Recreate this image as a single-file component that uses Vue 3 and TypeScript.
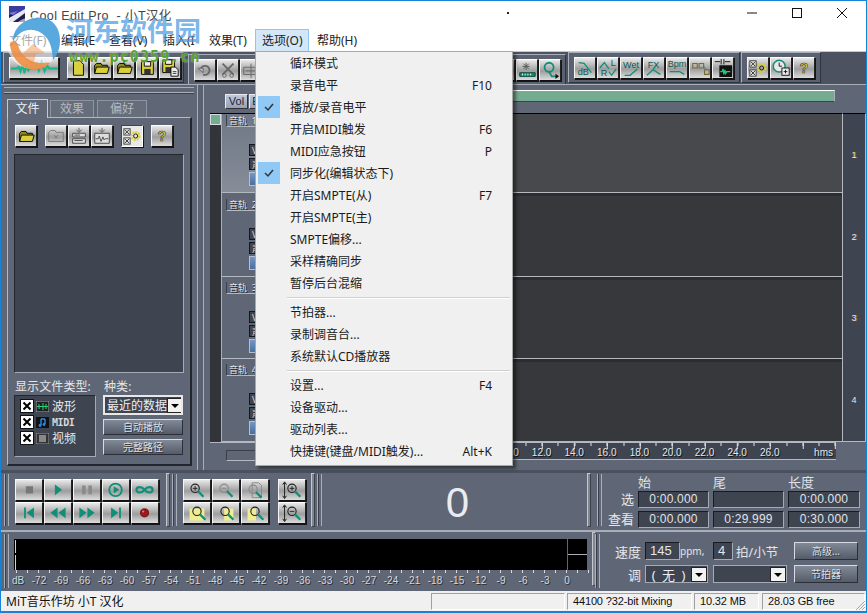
<script setup lang="ts">
const Y = '#d8d03c'
const T = '#0f8f78'
const folder = `<path d="M4 17V8l2-2h5l1 2h6v2" fill="#8f8a20" stroke="#000"/><path d="M4 17l2-7h14l-2 7z" fill="${Y}" stroke="#000"/>`
const floppy = `<path d="M5 4h13v14H5z" fill="${Y}" stroke="#000"/><path d="M8 4h7v5H8z" fill="#eee" stroke="#000"/><path d="M8 12h7v6H8z" fill="#333"/>`
const gear = `<rect x="2" y="3" width="7" height="7" fill="#ddd" stroke="#444"/><path d="M3 4l5 5M8 4l-5 5" stroke="#333"/><rect x="2" y="13" width="7" height="7" fill="#ddd" stroke="#444"/><path d="M3 14l5 5M8 14l-5 5" stroke="#333"/><circle cx="15" cy="11" r="4" fill="none" stroke="#d8d03c" stroke-width="3" stroke-dasharray="2 1"/><circle cx="15" cy="11" r="2.2" fill="none" stroke="#111"/>`
const help = `<text x="11" y="17" text-anchor="middle" font-family="Liberation Sans" font-weight="700" font-size="16" fill="${Y}" stroke="#333" stroke-width=".6">?</text>`
const teal = (d: string) => `<path d="${d}" fill="none" stroke="${T}" stroke-width="1.4"/>`
const word = (s: string, x: number, y: number, a = 'start') => `<text x="${x}" y="${y}" text-anchor="${a}" font-family="Liberation Sans" font-size="10" fill="#0b5a50">${s}</text>`
const grey = (s: string) => `<g stroke="#666" fill="#bbb">${s}</g>`

const bar1 = [
  `<path d="M6 3h7l4 4v12H6z" fill="${Y}" stroke="#000"/>`,
  folder,
  `<path d="M11 2v5" stroke="${T}" stroke-width="2"/><path d="M8 6h6l-3 3z" fill="${T}"/>` + folder,
  floppy,
  `<g transform="translate(-2 -2)">${floppy}</g><path d="M12 10h5l3 3v7h-8z" fill="#eee" stroke="#000"/><path d="M14 15h4M14 17h4" stroke="#333"/>`,
]
const bar2 = [
  grey(`<path d="M6 11a5 5 0 1 1 3 5" fill="none" stroke-width="2"/><path d="M3 9h6v5z"/>`),
  `<path d="M5 4l12 12M17 4L5 16" stroke="#666" stroke-width="2"/><circle cx="7" cy="17" r="2" fill="none" stroke="#666"/><circle cx="15" cy="17" r="2" fill="none" stroke="#666"/>`,
  grey(`<path d="M3 8h16v8H3z" fill="none"/><path d="M5 12h12M11 4v16"/>`),
  '', '', '', '', '', '', '', '', '', '', '',
  `<path d="M3 14h17v4H3z" fill="${T}" stroke="#043"/><path d="M6 15v2M9 15v2M12 15v2M15 15v2" stroke="#fff"/><path d="M10 3v8M6 7h8M7 4l6 6M13 4l-6 6" stroke="#555"/>`,
  `<circle cx="10" cy="8" r="5" fill="none" stroke="${T}" stroke-width="2"/><path d="M10 13l3 5h6" fill="none" stroke="${T}" stroke-width="2"/><path d="M17 15l4 3-4 3z" fill="#111"/>`,
]
const bar3 = [
  word('dB', 3, 19) + teal('M4 5l6 1 8 10'),
  word('L', 14, 9) + word('R', 3, 20) + teal('M2 11l5-6 5 7M12 15l3 4 5-7'),
  word('Wet', 11, 11, 'middle') + teal('M4 19h6l8-7'),
  word('FX', 4, 11) + teal('M3 19l7-6 8 5M10 13l3-5'),
  word('Bpm', 11, 10, 'middle') + teal('M3 15h6l5 0 5 3'),
  `<path d="M3 6h5v5H3zM10 6h5v5h-5zM16 13h5v5h-5z" fill="none" stroke="#7a6a3a" stroke-width="1.2"/><path d="M15 9l3 4" stroke="${T}"/>`,
  `<rect x="7" y="8" width="14" height="13" fill="#111"/><path d="M8 15h2l1-3 1 6 1-5 1 4 1-2h4" fill="none" stroke="#2bc87a" stroke-width="1.4"/><path d="M2 4h6M13 4h6M9 1v6M12 1v6" stroke="#111"/>`,
]
const bar4 = [
  gear,
  `<circle cx="9" cy="9" r="6.5" fill="#e8e8e8" stroke="${T}" stroke-width="1.6"/><path d="M9 5v4h3" fill="none" stroke="#111"/><rect x="12" y="11" width="8" height="8" fill="#eee" stroke="#111"/><path d="M16 13v4M14 15h4" stroke="#111"/>`,
  help,
]
const panelBtns = [
  { n: folder, cls: '' },
  { n: `<path d="M3 17V7l2-2h5l1 2h8v10z" fill="none" stroke="#777"/><path d="M9 10l4 4M13 10l-4 4" stroke="#777"/>`, cls: 'mt' },
  { n: `<path d="M11 2v4M8 4l3 3 3-3" stroke="#555" fill="none"/><path d="M4 8h14v4H4zM4 14h14v5H4z" fill="#ddd" stroke="#444"/><path d="M6 10h6M6 16h9" stroke="#444"/>`, cls: '' },
  { n: `<path d="M11 2v4M8 4l3 3 3-3" stroke="#555" fill="none"/><path d="M3 8h16v11H3z" fill="#ddd" stroke="#444"/><path d="M4 14h3l1-3 2 6 2-5 1 3 2-1h3" fill="none" stroke="#444"/>`, cls: '' },
  { n: gear, cls: 'pressed sp' },
  { n: help, cls: 'sp2' },
]
const tri = (d: string, c = T) => `<path d="${d}" fill="${c}"/>`
const tBtns = [
  `<rect x="11" y="7" width="8" height="8" fill="#777"/>`,
  tri('M11 5l8 6-8 6z'),
  `<path d="M9 6h4v10H9zM16 6h4v10h-4z" fill="#8a8a8a"/>`,
  `<circle cx="14" cy="11" r="7" fill="none" stroke="${T}" stroke-width="2"/>` + tri('M12 7l6 4-6 4z'),
  `<path d="M14 11c-3-4-9-4-9 0s6 4 9 0 9-4 9 0-6 4-9 0z" fill="none" stroke="${T}" stroke-width="2.4"/>`,
  `<path d="M9 5h2v12H9z" fill="${T}"/>` + tri('M20 5v12l-8-6z'),
  tri('M14 5v12l-8-6zM23 5v12l-8-6z'),
  tri('M6 5v12l8-6zM15 5v12l8-6z'),
  tri('M9 5v12l8-6z') + `<path d="M18 5h2v12h-2z" fill="${T}"/>`,
  `<circle cx="14" cy="11" r="4.5" fill="#a01818" stroke="#601010"/><circle cx="12.5" cy="9.5" r="1.2" fill="#e08080"/>`,
]
const lens = (x: number, y: number, inner = '', c = '#222') => `<circle cx="${x}" cy="${y}" r="4.5" fill="none" stroke="${c}" stroke-width="1.2"/><path d="M${x + 3} ${y + 3}l6 6" stroke="${T}" stroke-width="2.4"/>${inner}`
const plus = (x: number, y: number, c = '#222') => `<path d="M${x - 2.5} ${y}h5M${x} ${y - 2.5}v5" stroke="${c}"/>`
const minus = (x: number, y: number, c = '#222') => `<path d="M${x - 2.5} ${y}h5" stroke="${c}"/>`
const note = '#f0ec90'
const zBtns = [
  lens(12, 9, plus(12, 9)),
  lens(12, 9, minus(12, 9, '#888'), '#888'),
  `<path d="M11 3h7l3 3v13h-10z" fill="none" stroke="#888"/>` + lens(12, 10, '', '#888'),
  `<rect x="6" y="6" width="16" height="13" fill="${note}"/>` + lens(14, 9),
  `<rect x="12" y="6" width="10" height="13" fill="${note}"/>` + lens(13, 9),
  `<rect x="6" y="6" width="9" height="13" fill="${note}"/>` + lens(14, 9),
]
const vBtns = [
  `<path d="M6 3v16M4 5l2-3 2 3M4 17l2 3 2-3" fill="none" stroke="#111"/>` + lens(14, 9, plus(14, 9)),
  `<path d="M6 3v16M4 5l2-3 2 3M4 17l2 3 2-3" fill="none" stroke="#111"/>` + lens(14, 9, minus(14, 9)),
]
const fileTypes = [
  { label: '波形', midi: false, svg: `<rect width="13" height="11" fill="#222" stroke="#aaa"/><path d="M1 5.5h11M3 3v5M7 2v7M10 3v5" stroke="#2bd07a"/>` },
  { label: 'MIDI', midi: true, svg: `<rect width="13" height="11" fill="#111"/><path d="M5 2v6M9 2v5M5 2h4" stroke="#2a8ae8" stroke-width="1.4" fill="none"/><circle cx="4" cy="8.5" r="1.4" fill="#2a8ae8"/><circle cx="8" cy="7.5" r="1.4" fill="#2a8ae8"/>` },
  { label: '视频', midi: false, svg: `<rect width="13" height="11" fill="#333" stroke="#999"/><rect x="3" y="2" width="7" height="7" fill="#888"/>` },
]
const menuBar = [
  { t: '文件(F)', w: 52 }, { t: '编辑(E', w: 48 }, { t: '查看(V)', w: 54 }, { t: '插入(I', w: 46 },
  { t: '效果(T)', w: 46 }, { t: '选项(O)', w: 54, on: true }, { t: '帮助(H)', w: 60 },
]
const menu = [
  { t: '循环模式' }, { t: '录音电平', k: 'F10' }, { t: '播放/录音电平', c: true }, { t: '开启MIDI触发', k: 'F6' },
  { t: 'MIDI应急按钮', k: 'P' }, { t: '同步化(编辑状态下)', c: true }, { t: '开启SMPTE(从)', k: 'F7' }, { t: '开启SMPTE(主)' },
  { t: 'SMPTE偏移...' }, { t: '采样精确同步' }, { t: '暂停后台混缩' }, { sep: true },
  { t: '节拍器...' }, { t: '录制调音台...' }, { t: '系统默认CD播放器' }, { sep: true },
  { t: '设置...', k: 'F4' }, { t: '设备驱动...' }, { t: '驱动列表...' }, { t: '快捷键(键盘/MIDI触发)...', k: 'Alt+K' },
]
const rulerLabels = ['10.0', '12.0', '14.0', '16.0', '18.0', '20.0', '22.0', '24.0', '26.0']
const scale = ['-72', '-69', '-66', '-63', '-60', '-57', '-54', '-51', '-48', '-45', '-42', '-39', '-36', '-33', '-30', '-27', '-24', '-21', '-18', '-15', '-12', '-9', '-6', '-3', '0']
const times = [
  { l: '选', v: ['0:00.000', '', '0:00.000'] },
  { l: '查看', v: ['0:00.000', '0:29.999', '0:30.000'] },
]
</script>

<template>
  <div class="win">
    <header class="title">
      <svg class="logo" viewBox="0 0 16 16"><rect width="16" height="16" fill="#20204a" /><path d="M0 0h16v5L6 9H0z" fill="#3a3aa0" /><path d="M0 12L16 3v4L4 16H0z" fill="#e8e8f4" /><path d="M0 7l9-2-5 4z" fill="#7a7ad0" /></svg>
      <span class="ttext">Cool Edit Pro &nbsp;- 小T汉化</span>
      <span class="dot"></span>
      <svg class="ctl" viewBox="0 0 12 12"><path d="M1 6h10" stroke="#111" /></svg>
      <svg class="ctl" viewBox="0 0 12 12"><rect x="1.5" y="1.5" width="9" height="9" fill="none" stroke="#111" /></svg>
      <svg class="ctl" viewBox="0 0 12 12"><path d="M1 1l10 10M11 1L1 11" stroke="#111" /></svg>
    </header>
    <nav class="menubar">
      <span v-for="m in menuBar" :key="m.t" class="mi" :class="{ on: m.on }" :style="{ width: m.w + 'px' }">{{ m.t }}</span>
    </nav>

    <section class="toolbar">
      <div class="tg g1">
        <button class="b wave">
          <svg viewBox="0 0 50 22"><path d="M1 11h6l2-2 2 5 2-8 2 10 2-8 2 5 2-3h5l2-4 2 7 3-9 3 10 3-6 2 3h9" fill="none" stroke="#10b88a" stroke-width="2" /></svg>
        </button>
        <button v-for="(s, i) in bar1" :key="i" class="b t"><svg viewBox="0 0 22 22" v-html="s"></svg></button>
      </div>
      <div class="tg g2"><button v-for="(s, i) in bar2" :key="i" class="b t"><svg viewBox="0 0 22 22" v-html="s"></svg></button></div>
      <div class="tg g3"><button v-for="(s, i) in bar3" :key="i" class="b t"><svg viewBox="0 0 22 22" v-html="s"></svg></button></div>
      <div class="tg g4"><button v-for="(s, i) in bar4" :key="i" class="b t"><svg viewBox="0 0 22 22" v-html="s"></svg></button></div>
    </section>

    <main class="work">
      <aside class="left">
        <div class="hgrip"></div>
        <div class="tabs">
          <span class="tab active">文件</span><span class="tab w44">效果</span><span class="tab w50">偏好</span>
        </div>
        <div class="lbody">
          <div class="lbtns">
            <button v-for="(p, i) in panelBtns" :key="i" class="b t" :class="p.cls"><svg viewBox="0 0 22 22" v-html="p.n"></svg></button>
          </div>
          <div class="list"></div>
          <div class="lbl"><span class="lbl1">显示文件类型:</span><span>种类:</span></div>
          <div class="lower">
            <div class="types">
              <div v-for="f in fileTypes" :key="f.label" class="ty">
                <span class="xb"><svg viewBox="0 0 10 10"><path d="M1.5 1.5l7 7M8.5 1.5l-7 7" stroke="#000" stroke-width="2" /></svg></span>
                <svg class="tyi" viewBox="0 0 13 11" v-html="f.svg"></svg>
                <span :class="{ midi: f.midi }">{{ f.label }}</span>
              </div>
            </div>
            <div class="lcol">
              <div class="combo wide"><span class="ctext">最近的数据</span><span class="arrow"></span></div>
              <button class="gb">自动播放</button>
              <button class="gb">完整路径</button>
            </div>
          </div>
        </div>
      </aside>
      <div class="split"></div>
      <div class="right">
        <div class="rtop">
          <div class="vtabs"><span class="vtab">Vol</span><span class="vtab e">E</span></div>
          <div class="greenbar"></div>
        </div>
        <div class="trackrow">
          <div class="strip"><div class="stripg"></div></div>
          <div class="tracks">
            <div v-for="n in 4" :key="n" class="track" :class="{ sel: n === 1 }">
              <div class="thead">
                <div class="tlabel">音轨&nbsp; {{ n }}</div>
                <div class="tc">V</div>
                <div class="tc">声</div>
                <div class="tblue"></div>
              </div>
              <div class="twave"></div>
            </div>
          </div>
          <div class="nums"><span v-for="n in 4" :key="n">{{ n }}</span></div>
        </div>
        <div class="rulerrow">
          <div class="rl"><div class="hscroll"></div></div>
          <div class="ruler">
            <span class="rsp"></span>
            <span v-for="r in rulerLabels" :key="r" class="rt">{{ r }}</span>
            <span class="hms">hms</span>
          </div>
        </div>
      </div>
    </main>

    <section class="transport">
      <div class="sec s1">
        <span class="grip"></span>
        <div class="tgrid"><button v-for="(s, i) in tBtns" :key="i" class="b tb"><svg viewBox="0 0 29 22" v-html="s"></svg></button></div>
        <span class="handle"></span>
      </div>
      <div class="sec s2">
        <span class="grip"></span>
        <div class="zgrid"><button v-for="(s, i) in zBtns" :key="i" class="b tb"><svg viewBox="0 0 28 22" v-html="s"></svg></button></div>
        <div class="vgrid"><button v-for="(s, i) in vBtns" :key="i" class="b tb"><svg viewBox="0 0 28 22" v-html="s"></svg></button></div>
        <span class="handle h2"></span>
      </div>
      <div class="sec s3">
        <span class="grip"></span>
        <div class="big">0</div>
        <span class="handle"></span>
      </div>
      <div class="sec s4">
        <span class="grip"></span>
        <div class="tm">
          <span></span><span class="hd">始</span><span class="hd">尾</span><span class="hd">长度</span>
          <template v-for="r in times" :key="r.l">
            <span class="tml">{{ r.l }}</span>
            <span v-for="(v, i) in r.v" :key="i" class="tbox">{{ v }}</span>
          </template>
        </div>
      </div>
    </section>

    <section class="meterrow">
      <div class="msec">
        <span class="grip g2"></span>
        <div class="mbody">
          <div class="meter">
            <div class="mblack"><i class="y1"></i><i class="y2"></i></div>
            <div class="mpeak"><i></i><i></i></div>
          </div>
          <div class="mticks"></div>
          <div class="scale"><span class="db">dB</span><span v-for="s in scale" :key="s">{{ s }}</span></div>
        </div>
        <span class="handle h3"></span>
      </div>
      <div class="bsec">
        <span class="grip g2"></span>
        <div class="bgrid">
          <div class="brow">
            <span class="blab">速度</span><span class="inp w35">145</span><span class="ppm">ppm,</span>
            <span class="inp w20">4</span><span class="bts">拍/小节</span><button class="gb big2">高级...</button>
          </div>
          <div class="brow r2">
            <span class="blab">调</span>
            <div class="combo c1"><span class="ctext2">( 无 )</span><span class="arrow"></span></div>
            <div class="combo c2"><span class="ctext2"></span><span class="arrow"></span></div>
            <button class="gb big2 b3">节拍器</button>
          </div>
        </div>
      </div>
    </section>

    <footer class="status">
      <span class="st0">MiT音乐作坊 小T 汉化</span>
      <span class="pane p1"></span>
      <span class="pane p2">44100 ?32-bit Mixing</span>
      <span class="pane p3">10.32 MB</span>
      <span class="pane p4">28.03 GB free</span>
      <svg class="sgrip" viewBox="0 0 12 12"><path d="M11 2L2 11M11 5l-6 6M11 8l-3 3" stroke="#aaa" /></svg>
    </footer>

    <div class="menu">
      <template v-for="(m, i) in menu" :key="i">
        <div v-if="m.sep" class="msep"></div>
        <div v-else class="mrow">
          <span class="chk" :class="{ show: m.c }">
            <svg v-if="m.c" viewBox="0 0 22 22"><path d="M7 11l3 3 5-6" fill="none" stroke="#333" stroke-width="1.5" /></svg>
          </span>
          <span class="mt">{{ m.t }}</span>
          <span class="mk">{{ m.k }}</span>
        </div>
      </template>
    </div>

    <div class="wm">
      <svg class="wmlogo" viewBox="0 0 60 56">
        <circle cx="28" cy="28" r="26" fill="#fff" opacity=".6" />
        <path d="M8 26C8 10 24 1 38 3c10 1 17 10 17 22 0 8-2 14-7 20-1-10-2-18-8-24C30 11 16 13 8 26z" fill="#3d9ad8" opacity=".85" />
        <path d="M5 28c2-3 7-2 8 2 3 11 12 18 24 18 3 0 6-1 8 0-5 5-12 8-20 6C14 52 5 40 5 28z" fill="#ef8a3c" opacity=".85" />
        <path d="M16 40l12-11 12 9-9 1-3 12z" fill="#ef8a3c" opacity=".45" />
      </svg>
      <span class="wmcn">河东软件园</span>
      <span class="wmurl">www.pc0359.cn</span>
    </div>
  </div>
</template>

<style scoped>
.win { position: relative; width: 867px; height: 613px; box-sizing: border-box; overflow: hidden; display: flex; flex-direction: column; border: 1px solid #1583d8; border-bottom-width: 2px; background: #4e5462; font: 12px "Noto Sans", "Noto Sans CJK SC", sans-serif; color: #111; }
button { font: inherit; padding: 0; margin: 0; }
svg { display: block; }

.title { height: 28px; flex: none; background: #fff; display: flex; align-items: center; padding-left: 8px; position: relative; overflow: hidden; }
.logo { width: 16px; height: 16px; margin-top: -2px; flex: none; }
.ttext { flex: none; margin-left: 5px; margin-top: -1px; width: 477px; font: 12.5px "Liberation Sans", "Noto Sans CJK SC", sans-serif; color: #444; white-space: nowrap; letter-spacing: .4px; }
.dot { flex: none; width: 2px; height: 2px; background: #222; margin-right: 237px; margin-top: -5px; }
.ctl { flex: none; width: 12px; height: 12px; margin-right: 33px; margin-top: -4px; }
.menubar { height: 22px; flex: none; background: #fff; display: flex; align-items: center; padding-left: 8px; border-bottom: 1px solid #c8c8c8; box-sizing: content-box; }
.mi { height: 22px; line-height: 23px; box-sizing: border-box; white-space: nowrap; overflow: hidden; color: #222; }
.mi.on { background: #d3e7f8; border: 1px solid #93c6ef; padding-left: 6px; margin-right: 8px; border-bottom: 0; line-height: 21px; }

.toolbar { height: 32px; flex: none; display: flex; padding-left: 2px; background: #4c5260; box-sizing: border-box; }
.tg { height: 31px; box-sizing: border-box; display: flex; padding: 4px 0 0 5px; background: #5a6170; border: 1px solid #2f333c; border-top-color: #aab0ba; border-left-color: #aab0ba; margin-right: 2px; }
.g1 { width: 181px; margin-right: 4px; }
.g2 { width: 378px; }
.g3 { width: 172px; margin-right: 1px; }
.g4 { width: 80px; }
.b { display: block; box-sizing: border-box; border: 1px solid; border-color: #fff #222 #111 #f4f4f4; background: linear-gradient(180deg, #e9e9e9 0%, #b4b4b4 38%, #9d9d9d 55%, #dcdcdc 100%); box-shadow: 1px 1px 0 #14161b; }
.t { width: 22px; height: 22px; margin-right: 1px; flex: none; }
.wave { width: 50px; height: 22px; margin-right: 8px; }

.work { height: 386px; flex: none; display: flex; background: #5f6776; border-top: 1px solid #a9afb8; box-sizing: border-box; }
.left { width: 196px; flex: none; padding-left: 6px; box-sizing: border-box; }
.hgrip { height: 4px; margin: 2px 3px 0 -3px; border-top: 1px solid #a9afb8; border-bottom: 1px solid #a9afb8; box-shadow: 0 1px 0 #3a3f4a; }
.tabs { display: flex; height: 19px; margin-top: 5px; align-items: flex-end; }
.tab { width: 44px; height: 16px; line-height: 16px; text-align: center; margin-right: 3px; background: #666e7c; color: #b4b9c2; border: 1px solid #8e95a0; border-bottom: 0; box-sizing: content-box; font-size: 12px; }
.tab.active { width: 39px; height: 18px; line-height: 18px; background: #5f6776; color: #eef0f4; margin-right: 2px; border-color: #c4c8cf; position: relative; top: 1px; z-index: 1; }
.w44 { width: 42px; }
.w50 { width: 48px; }
.lbody { width: 185px; height: 349px; box-sizing: border-box; border: 1px solid #b4b9c1; border-right: 2px solid #23262d; border-bottom: 2px solid #23262d; background: #5f6776; padding: 7px 0 0 7px; }
.lbtns { display: flex; height: 22px; }
.lbtns .b.mt { margin-left: 7px; }
.sp { margin-left: 7px; }
.sp2 { margin-left: 7px; }
.pressed { background: #e8e8e8; border-color: #444 #fff #fff #444; }
.list { width: 170px; height: 219px; margin: 7px 0 0 -1px; box-sizing: border-box; background: #3e4450; border: 1px solid; border-color: #23262d #a5abb4 #a5abb4 #23262d; }
.lbl { display: flex; margin-top: 5px; height: 17px; line-height: 17px; color: #e4e6ea; letter-spacing: .1px; }
.lbl1 { width: 89px; flex: none; }
.lower { display: flex; margin-left: -1px; }
.types { width: 82px; height: 62px; box-sizing: border-box; background: #3e4450; padding: 2px 0 0 5px; border: 1px solid; border-color: #23262d #a5abb4 #a5abb4 #23262d; margin-right: 7px; }
.ty { height: 16px; display: flex; align-items: center; color: #e8e9ec; font-size: 12px; }
.xb { width: 10px; height: 10px; padding: 1px; background: #fff; border: 1px solid #111; margin-right: 2px; }
.tyi { width: 13px; height: 11px; margin-right: 3px; }
.midi { font: 700 10px "DejaVu Sans Mono", monospace; letter-spacing: -.4px; color: #d8d8d8; }
.lcol { width: 80px; }
.combo { box-sizing: border-box; height: 19px; display: flex; align-items: center; background: #3e4450; border: 2px solid; border-color: #e8e8e8; color: #eceef2; overflow: hidden; position: relative; }
.wide { height: 20px; margin-bottom: 4px; }
.ctext { font-size: 12px; white-space: nowrap; width: 60px; overflow: hidden; padding-left: 2px; flex: none; }
.arrow { flex: none; width: 16px; height: 16px; margin-left: auto; background: #f2f2f2; position: relative; border: 1px solid #222; box-sizing: border-box; }
.arrow::after { content: ""; position: absolute; left: 3px; top: 5px; border: 4px solid transparent; border-top: 4px solid #000; }
.gb { display: block; width: 80px; height: 16px; margin-bottom: 4px; box-sizing: border-box; border: 1px solid; border-color: #d8dce2 #2b2e36 #2b2e36 #d8dce2; background: linear-gradient(180deg, #828997, #545b69); color: #dde0e5; font-size: 10px; line-height: 13px; text-shadow: 1px 1px 0 #333; }

.split { width: 7px; flex: none; border-left: 1px solid #a9afb8; border-right: 1px solid #a9afb8; box-sizing: border-box; background: #5a6170; }
.right { flex: 1; min-width: 0; display: flex; flex-direction: column; }
.rtop { height: 28px; flex: none; display: flex; }
.vtabs { display: flex; margin: 9px 0 0 21px; height: 15px; flex: none; }
.vtab { width: 23px; height: 15px; line-height: 14px; text-align: center; box-sizing: border-box; background: linear-gradient(180deg, #bfc9dc, #96a0b4); border: 1px solid #e8eaf0; border-right-color: #333; border-bottom-color: #333; font: 11px "Liberation Sans", sans-serif; color: #223; margin-right: 1px; }
.vtab.e { width: 14px; }
.greenbar { flex: 1; height: 12px; margin: 5px 31px 0 10px; box-sizing: border-box; background: #74ab91; border: 1px solid; border-color: #fff #a9afb8 #2c4c3c #a9afb8; }
.trackrow { height: 329px; flex: none; display: flex; padding-left: 6px; }
.strip { width: 11px; flex: none; background: #32343a; border-top: 1px solid #000; }
.stripg { height: 11px; background: #74ab91; border: 1px solid #d8dce0; box-sizing: border-box; }
.tracks { flex: 1; min-width: 0; border-top: 1px solid #000; display: flex; flex-direction: column; }
.track { display: flex; flex: none; height: 82px; }
.track:nth-child(1) { height: 79px; }
.track:nth-child(2) { height: 84px; }
.track:nth-child(4) { height: 83px; }
.thead { width: 120px; flex: none; box-sizing: border-box; padding: 5px 0 0 4px; background: #5f6776; border-left: 1px solid #a9afb8; border-bottom: 1px solid #b4b9c1; }
.track:nth-child(2) .thead { padding-top: 6px; }
.sel .thead { background: linear-gradient(180deg, #6f7786, #868d98); padding-top: 1px; }
.tlabel { width: 100px; height: 12px; line-height: 11px; box-sizing: border-box; border-bottom: 1px solid #b4b9c1; border-left: 1px solid #3a3f4a; font-size: 9px; color: #e4e6ea; text-shadow: 1px 1px 0 #222; padding-left: 2px; }
.sel .tlabel { margin-bottom: 2px; }
.tc { width: 60px; height: 12px; line-height: 11px; margin: 2px 0 0 23px; box-sizing: border-box; background: #3e4450; border: 1px solid #15171c; color: #dfd8c0; font-size: 9px; padding-left: 2px; }
.tc:nth-of-type(2) { margin-top: 17px; }
.tblue { width: 60px; height: 14px; margin: 2px 0 0 23px; background: linear-gradient(180deg, #7297c8, #4a6f9f); border: 1px solid #b4c0d0; box-sizing: border-box; }
.twave { flex: 1; background: #37383c; border-bottom: 1px solid #b4b9c1; box-shadow: inset 0 3px 0 #2c2d30; }
.sel .twave { background: #48494d; box-shadow: none; }
.nums { width: 24px; flex: none; box-sizing: border-box; display: flex; flex-direction: column; background: #3e4450; border: 1px solid #b4b9c1; border-top: 1px solid #000; }
.nums span { flex: 1; display: flex; align-items: center; justify-content: center; font: 9px "Liberation Sans", sans-serif; color: #e4e6ea; text-shadow: 1px 0 0 #b06a18; }
.nums span:last-child { text-shadow: none; }
.rulerrow { display: flex; height: 19px; padding-left: 6px; flex: none; }
.rl { width: 46px; flex: none; box-sizing: border-box; padding: 7px 0 0 16px; border-top: 1px solid #b4b9c1; }
.hscroll { height: 11px; box-sizing: border-box; border: 1px solid #3a3f4a; border-bottom-color: #b4b9c1; border-right: 0; }
.ruler { width: 580px; flex: none; box-sizing: border-box; display: flex; align-items: flex-end; height: 18px; background-color: #3e4450; border-top: 1px solid #b4b9c1; border-bottom: 1px solid #b4b9c1; background-repeat: repeat-x; color: #e4e6ea; font: 10px "Liberation Sans", sans-serif; text-shadow: 1px 1px 0 #111; overflow: hidden; background-image: repeating-linear-gradient(90deg, #dfe2e6 0 1px, transparent 1px 32.6px), repeating-linear-gradient(90deg, #dfe2e6 0 1px, transparent 1px 16.3px); background-position: 24.8px 0, 8.5px 0; background-size: 100% 6px, 100% 3px; }
.rsp { width: 236.7px; flex: none; }
.rt { width: 32.6px; flex: none; text-align: center; line-height: 12px; }
.hms { margin-left: auto; margin-right: 3px; line-height: 12px; }

.transport { height: 62px; flex: none; display: flex; background: #5f6776; border-top: 3px solid #4a505d; border-bottom: 2px solid #a9afb8; box-sizing: border-box; }
.sec { display: flex; flex: none; height: 100%; box-sizing: border-box; }
.s1 { width: 169px; padding-left: 3px; }
.s2 { width: 145px; padding-left: 2px; }
.s3 { width: 276px; padding-left: 2px; }
.s4 { flex: 1; padding-left: 6px; }
.grip { width: 5px; flex: none; border-left: 1px solid #a9afb8; border-right: 1px solid #a9afb8; box-shadow: inset 1px 0 0 #3a3f4a; box-sizing: border-box; margin-top: 1px; height: 52px; }
.handle { width: 4px; height: 54px; flex: none; margin-left: auto; background: #808794; border: 1px solid #3a3f4a; border-left-color: #c4c8ce; border-top-color: #c4c8ce; box-sizing: border-box; }
.tgrid { display: grid; grid-template-columns: repeat(5, 29px); grid-auto-rows: 23px; margin: 6px 0 0 6px; }
.tb { width: 28px; height: 22px; }
.zgrid { display: grid; grid-template-columns: repeat(3, 29px); grid-auto-rows: 23px; margin: 6px 0 0 6px; }
.vgrid { display: grid; grid-auto-rows: 23px; margin: 6px 0 0 8px; }
.big { flex: 1; text-align: center; font: 42px/52px "Liberation Sans", sans-serif; color: #eaecf0; padding: 4px 0 0 6px; }
.tm { display: grid; grid-template-columns: 30px 71px 71px 72px; column-gap: 4px; grid-template-rows: 15px 17px 17px; row-gap: 3px; margin: 0 0 0 2px; height: 55px; }
.hd { color: #dfe2e6; font-size: 13px; line-height: 18px; }
.tml { text-align: right; color: #e4e6ea; font-size: 13px; line-height: 17px; padding-right: 0; white-space: nowrap; }
.tbox { box-sizing: border-box; height: 17px; background: #3e4450; border: 1px solid; border-color: #191b20 #a5abb4 #a5abb4 #191b20; text-align: center; font: 12px/15px "Liberation Sans", sans-serif; color: #e0e3e8; letter-spacing: .2px; }

.meterrow { height: 59px; flex: none; display: flex; background: #5f6776; box-sizing: border-box; }
.msec { width: 590px; flex: none; display: flex; padding-left: 3px; box-sizing: border-box; }
.g2 { height: 54px; margin-top: 2px; }
.mbody { width: 576px; flex: none; margin-left: 5px; padding-top: 7px; }
.meter { display: flex; height: 31px; }
.mblack { width: 553px; background: #000; position: relative; }
.y1, .y2 { position: absolute; left: 1px; width: 1px; background: #f4e030; }
.y1 { top: 1px; height: 13px; }
.y2 { top: 16px; height: 15px; }
.mpeak { width: 19px; margin-left: 1px; display: flex; flex-direction: column; gap: 1px; background: #a9afb8; }
.mpeak i { flex: 1; background: #000; }
.mticks { height: 3px; background-image: repeating-linear-gradient(90deg, #d8dbe0 0 1px, transparent 1px 11px); background-position: 2px 0; }
.scale { display: flex; padding: 1px 0 0 2px; margin-left: -8px; height: 14px; font: 10px/14px "Liberation Sans", sans-serif; color: #d4d7dc; text-shadow: 1px 1px 0 #2c2f37; white-space: nowrap; }
.scale span { width: 22px; flex: none; text-align: center; }
.scale .db { width: 20px; }
.h3 { margin-left: 2px; }
.bsec { flex: 1; display: flex; padding-left: 4px; box-sizing: border-box; }
.bgrid { padding-top: 10px; }
.brow { display: flex; align-items: center; height: 18px; color: #e4e6ea; font-size: 13px; }
.r2 { margin-top: 5px; }
.blab { width: 41px; text-align: right; margin-right: 4px; flex: none; }
.inp { box-sizing: border-box; height: 18px; background: #3e4450; border: 1px solid; border-color: #191b20 #a5abb4 #a5abb4 #191b20; font: 13px/15px "Liberation Sans", sans-serif; padding-left: 4px; color: #e4e6ea; }
.w35 { width: 35px; }
.w20 { width: 20px; }
.ppm { width: 33px; flex: none; font-size: 10px; }
.bts { width: 58px; margin-left: 3px; flex: none; font-size: 12.5px; }
.big2 { width: 64px; height: 18px; margin: 0; font-size: 10px; }
.c1 { width: 63px; height: 18px; margin-right: 5px; border: 1px solid #a5abb4; }
.c2 { width: 74px; height: 18px; border: 1px solid #a5abb4; }
.ctext2 { flex: 1; text-align: center; font-size: 13px; white-space: nowrap; word-spacing: 3px; }
.combo .arrow { height: 15px; }
.b3 { margin-left: 7px; }

.status { height: 20px; flex: none; background: #f0f0f0; display: flex; align-items: center; position: relative; font-size: 12px; }
.st0 { width: 430px; flex: none; padding-left: 5px; box-sizing: border-box; white-space: nowrap; }
.pane { height: 17px; box-sizing: border-box; border: 1px solid; border-color: #a0a0a0 #fff #fff #a0a0a0; padding-left: 5px; white-space: nowrap; flex: none; margin-right: 2px; font: 11px/15px "Liberation Sans", sans-serif; letter-spacing: -.15px; }
.p1 { width: 134px; padding: 0; }
.p2 { width: 125px; }
.p3 { width: 65px; margin-right: 3px; }
.p4 { width: 103px; margin: 0; }
.sgrip { position: absolute; right: 0; bottom: 0; width: 12px; height: 12px; }

.menu { position: absolute; left: 254px; top: 50px; width: 258px; height: 415px; box-sizing: border-box; background: #f0f0f0; border: 1px solid #a8a8a8; box-shadow: 3px 3px 3px rgba(0, 0, 0, .45); z-index: 5; }
.mrow { height: 22px; display: flex; align-items: center; padding-left: 2px; }
.chk { width: 22px; height: 22px; flex: none; margin-right: 10px; }
.chk.show { background: #90c8f6; }
.mrow .mt { flex: none; white-space: nowrap; color: #1a1a1a; }
.mk { margin-left: auto; margin-right: 20px; color: #1a1a1a; }
.msep { height: 1px; margin: 3px 2px 2px 31px; background: #d0d0d0; border-bottom: 1px solid #fff; }

.wm { position: absolute; left: 0; top: 0; width: 210px; height: 72px; pointer-events: none; z-index: 3; }
.wmlogo { position: absolute; left: 4px; top: 14px; width: 60px; height: 56px; }
.wmcn { position: absolute; left: 65px; top: 10px; font: 700 27px/38px "Noto Sans CJK SC", sans-serif; color: rgba(75, 155, 225, .72); white-space: nowrap; }
.wmurl { position: absolute; left: 68px; top: 47px; font: 700 15px/18px "DejaVu Sans Mono", monospace; letter-spacing: 1.1px; color: rgba(80, 160, 40, .95); text-shadow: 0 0 2px rgba(255, 255, 255, .7); white-space: nowrap; }
</style>
